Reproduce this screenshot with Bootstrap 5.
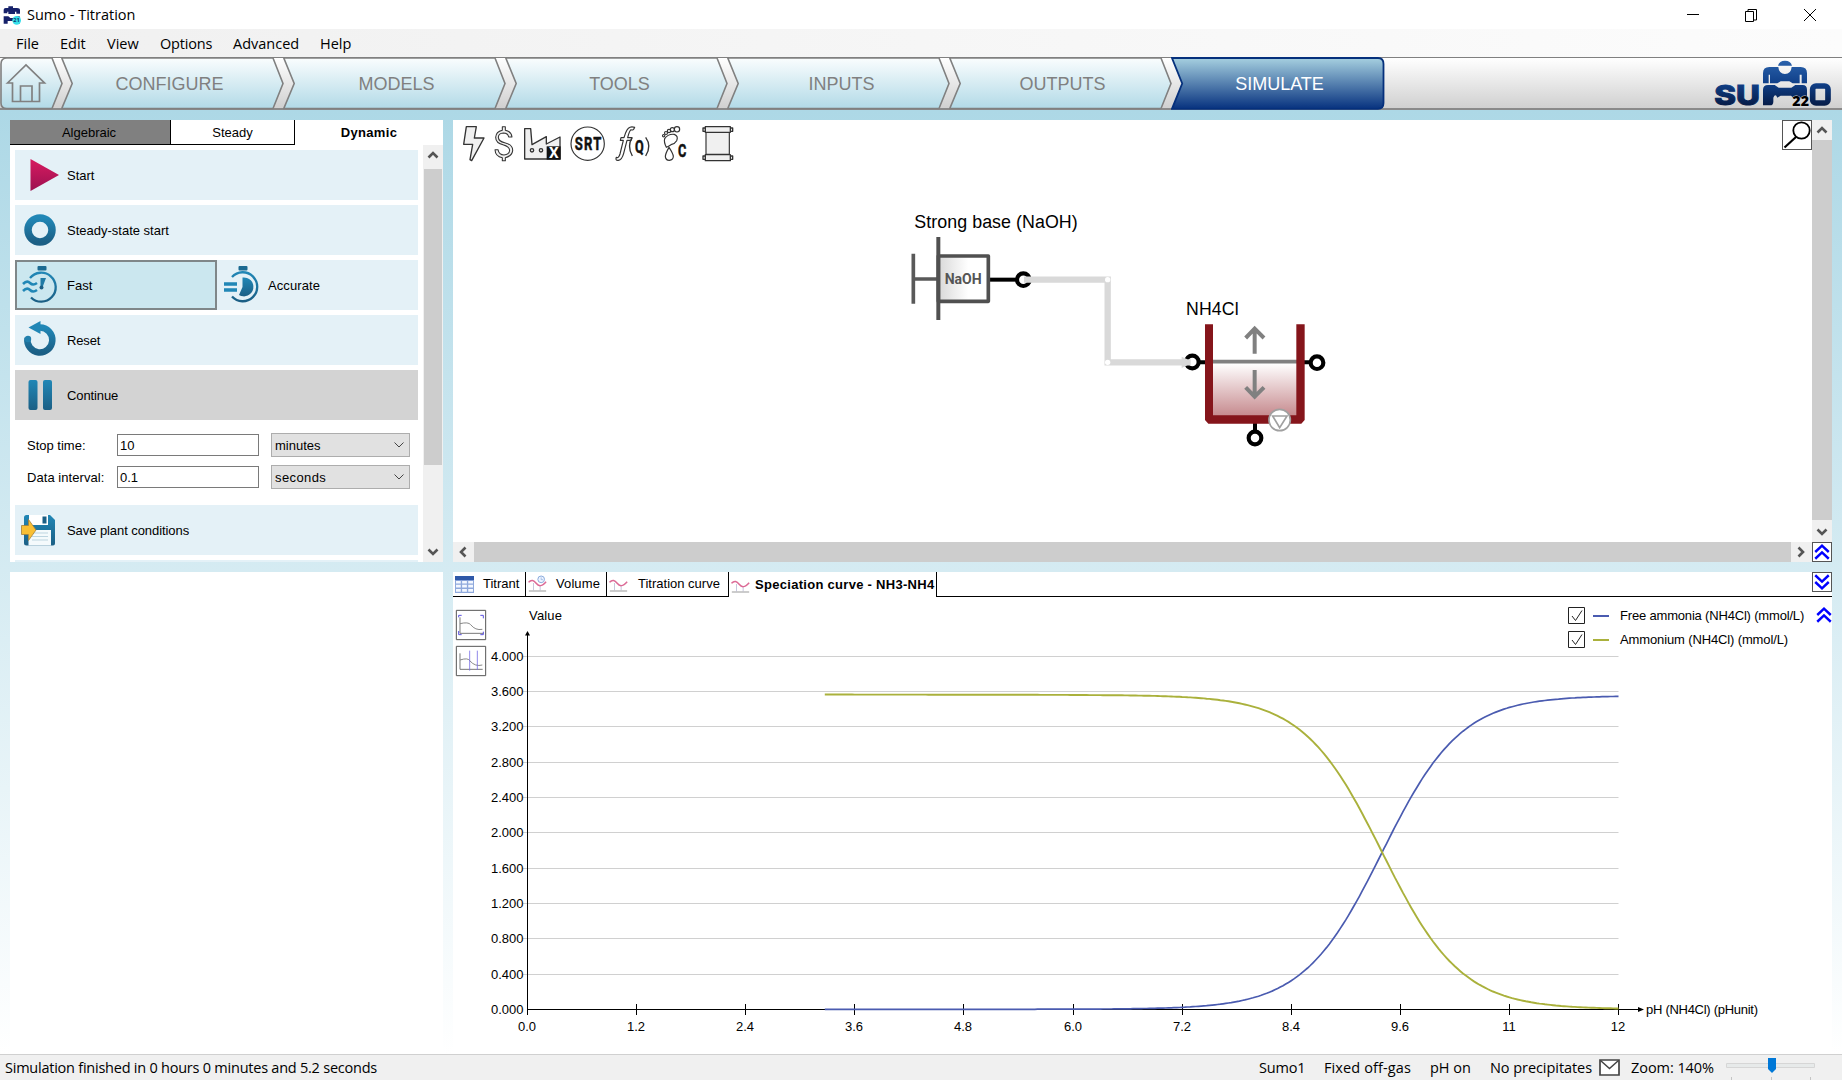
<!DOCTYPE html>
<html lang="en">
<head>
<meta charset="utf-8">
<title>Sumo - Titration</title>
<link rel="stylesheet" href="https://cdn.jsdelivr.net/npm/bootstrap@5.3.0/dist/css/bootstrap.min.css">
<style>
html,body{height:100%;overflow:hidden}
body{font-family:"Liberation Sans",Arial,sans-serif;font-size:13px;line-height:1;color:#000;background:#fff}
svg{display:block;flex:none}
.ui{font-family:"Open Sans","Noto Sans",sans-serif;font-size:14.5px;white-space:nowrap}
.ui span{display:block;flex:none;white-space:nowrap}
.titlebar{height:29px;padding:0 26px 0 3px}
.titlebar span,.menus span,.status span{padding-top:2px}
.menus{height:28px;padding-left:16px;background:linear-gradient(90deg,#f0f0f0,#fcfcfc)}
.steps{height:53px;background:linear-gradient(#fff,#d0d0d0);border-top:1px solid #808080;border-bottom:2px solid #8a8a8a}
.step{position:relative;width:222px;height:51px;font-size:18px;color:#808080}
.step svg{position:absolute;left:0;top:-1px}
.step b{position:relative;font-weight:400}
.work{background:linear-gradient(#add8e6,#fff);padding:10px 10px 0;height:944px}
.left{width:433px;margin-right:10px}
.pane{background:#fff}
.modes{height:25px}
.modes>div{border:0 solid #000;border-width:0 1px 1px 0;display:flex;align-items:center;justify-content:center}
.row-btn{height:50px;background:#e4f1f7;margin-bottom:5px;width:403px;position:relative}
.row-btn svg{position:absolute;left:0;top:0}
.row-btn span{margin-left:52px}
.sb{background:#f0f0f0}
.thumb{background:#cdcdcd}
.inp{width:142px;height:22px;border:1px solid #7a7a7a;padding-left:2px;display:flex;align-items:center}
.sel{width:139px;height:24px;border:1px solid #adadad;background:#e1e1e1;padding:0 5px 0 3px;margin-left:12px}
.tabs{height:25px;line-height:24px}
.tabs>div{border:0 solid #000;border-width:0 1px 1px 0;display:flex;align-items:center}
.boxed{border:1px solid #555;background:#fff}
.legendbox{position:absolute;left:1115px;top:9px;width:246px;background:rgba(255,255,255,.75);white-space:nowrap}
.status{height:26px;border-top:1px solid #d0d0d0;background:#f0f0f0}
</style>
</head>
<body class="d-flex flex-column">
<svg width="0" height="0" style="position:absolute">
<defs>
<linearGradient id="gs" x1="0" y1="0" x2="0" y2="1"><stop offset="0" stop-color="#fafdfe"/><stop offset="1" stop-color="#b2dae7"/></linearGradient>
<linearGradient id="ga" x1="0" y1="0" x2="0" y2="1"><stop offset="0" stop-color="#a6d0e0"/><stop offset="1" stop-color="#07327f"/></linearGradient>
<linearGradient id="gb" x1="0" y1="0" x2="0" y2="1"><stop offset="0" stop-color="#2187b6"/><stop offset="1" stop-color="#1b5f85"/></linearGradient>
<linearGradient id="gr" x1="0" y1="0" x2="0" y2="1"><stop offset="0" stop-color="#d81b60"/><stop offset="1" stop-color="#9c1150"/></linearGradient>
<linearGradient id="gl" gradientUnits="userSpaceOnUse" x1="0" y1="32" x2="0" y2="166"><stop offset="0" stop-color="#2a62ac"/><stop offset=".5" stop-color="#104089"/><stop offset="1" stop-color="#061c48"/></linearGradient>
<linearGradient id="gt" x1="0" y1="0" x2="0" y2="1"><stop offset="0" stop-color="#fff"/><stop offset="1" stop-color="#c68a8e"/></linearGradient>
<linearGradient id="gn" x1="0" y1="0" x2="1" y2="0"><stop offset="0" stop-color="#d8d8d8"/><stop offset=".6" stop-color="#fff"/></linearGradient>
<symbol id="stepshape" viewBox="0 0 224 53"><path d="M.8 1H212L222 26.500 212 51.500H.8L11.200 26.500Z" fill="url(#gs)" stroke="#808080" stroke-width="1.600"/></symbol>
<symbol id="up2" viewBox="0 0 20 20"><path d="M2.500 10 10 3l7.500 7M2.500 17.500l7.500-7 7.500 7" fill="none" stroke="#00f" stroke-width="2.700"/></symbol>
<symbol id="chev" viewBox="0 0 20 20"><path d="M5.500 12.500 10 8l4.500 4.500" fill="none" stroke="#555" stroke-width="2.600"/></symbol>
<symbol id="curve" viewBox="0 0 56 54"><path d="M2 48H54" stroke="#999" stroke-width="3"/><path d="M16 24V46M36 30V46" stroke="#aac" stroke-width="2"/><path d="M1 22C10 12 17 16 24 25S40 36 54 20" fill="none" stroke="#dc6a96" stroke-width="4.500"/></symbol>
</defs>
</svg>

<header class="titlebar ui d-flex align-items-center">
<svg width="19" height="20" viewBox="0 0 57 60"><g fill="#16216a"><path d="M2 25V14Q2 9 8 9H16V4H30V9H42Q51 9 51 15V26H40V20H36V27H16V20H13V25Z"/><path d="M2 56V34H16L22 39H34L40 34H50V56H38L32 48H22L14 48V56Z"/></g><circle cx="41" cy="46" r="13" fill="#37e0ea"/><text x="31" y="52" font-size="17" font-weight="700" fill="#0b3a70">21</text></svg>
<span style="margin-left:5px">Sumo - Titration</span>
<svg class="ms-auto" width="130" height="16" viewBox="0 0 130 16" fill="none" stroke="#000"><path d="M1 7.500H13M59.500 4.500h8v10h-8ZM62 4V2.500h8.500V13H68M118 2l12 12M130 2 118 14"/></svg>
</header>
<nav class="menus ui d-flex align-items-center">
<span style="width:44px">File</span><span style="width:47px">Edit</span><span style="width:53px">View</span><span style="width:73px;letter-spacing:-.2px">Options</span><span style="width:87px">Advanced</span><span>Help</span>
</nav>
<div class="steps d-flex">
<svg width="61" height="53" viewBox="0 0 61 53" style="margin-top:-1px;overflow:visible"><path d="M7 1H52L62 26.500 52 51.500H7Q1 51.500 1 46V7Q1 1 7 1Z" fill="url(#gs)" stroke="#808080" stroke-width="1.600"/><path d="M7.500 26 26 8 44.500 26H39.500V44.500H12.500V26Z" fill="none" stroke="#808080" stroke-width="1.700"/><path d="M20.500 44V29H32V44" fill="none" stroke="#808080" stroke-width="1.700"/></svg>
<div class="step"><svg width="224" height="53"><use href="#stepshape"/></svg><b class="d-flex h-100 align-items-center justify-content-center" style="padding-right:5px">CONFIGURE</b></div>
<div class="step"><svg width="224" height="53"><use href="#stepshape"/></svg><b class="d-flex h-100 align-items-center justify-content-center" style="padding-left:5px">MODELS</b></div>
<div class="step"><svg width="224" height="53"><use href="#stepshape"/></svg><b class="d-flex h-100 align-items-center justify-content-center" style="padding-left:7px">TOOLS</b></div>
<div class="step"><svg width="224" height="53"><use href="#stepshape"/></svg><b class="d-flex h-100 align-items-center justify-content-center" style="padding-left:7px">INPUTS</b></div>
<div class="step"><svg width="224" height="53"><use href="#stepshape"/></svg><b class="d-flex h-100 align-items-center justify-content-center" style="padding-left:5px">OUTPUTS</b></div>
<div class="step text-white"><svg width="214" height="53" viewBox="0 0 214 53"><path d="M1 1H207Q212.500 1 212.500 7V46Q212.500 51.800 207 51.800H1L11.200 26.500Z" fill="url(#ga)" stroke="#05307c" stroke-width="1.800"/></svg><b class="d-flex h-100 align-items-center justify-content-center" style="padding-right:5px">SIMULATE</b></div>
<svg class="ms-auto" width="152" height="53" viewBox="0 21 456 159" style="margin-top:-1px;overflow:visible"><g fill="url(#gl)"><text x="73" y="164" font-family="Inter,sans-serif" font-weight="800" font-size="82" textLength="137" lengthAdjust="spacingAndGlyphs" stroke="url(#gl)" stroke-width="3">SU</text><rect x="368" y="108" width="46" height="51" rx="10" fill="none" stroke="url(#gl)" stroke-width="17"/><path d="M264 47Q268 32 285 32T306 47Z"/><path d="M219 100V70Q219 51 238 51H265Q267 72 285 72T305 51H332Q351 51 351 70V100H335V74H329V100H308L298 94H272L262 100H240V74H236V100Z"/><path d="M219 166V120Q219 105 234 105H254L266 113H304L316 105H338Q351 105 351 120V145H312L303 137H272L262 143Q256 129 250 143V155Q250 166 240 166Z"/></g><text x="307" y="169" font-family="Open Sans,sans-serif" font-weight="800" font-size="43" textLength="50" lengthAdjust="spacingAndGlyphs" stroke="#ddd" stroke-width="3" paint-order="stroke">22</text></svg>
</div>

<main class="work d-flex">
<section class="left d-flex flex-column">
<div class="pane overflow-hidden" style="height:442px">
<div class="modes d-flex"><div style="width:161px;background:#808080;padding-right:2px">Algebraic</div><div style="width:124px">Steady</div><div class="flex-fill border-0 fw-bold" style="letter-spacing:.35px"><span>Dynamic</span></div></div>
<div class="d-flex" style="height:417px">
<div style="padding:5px 0 0 5px;width:413px">
<div class="row-btn d-flex align-items-center"><svg width="50" height="50"><path d="M15.500 9 44 25 15.500 41Z" fill="url(#gr)"/></svg><span>Start</span></div>
<div class="row-btn d-flex align-items-center"><svg width="50" height="50"><circle cx="25" cy="25" r="12" fill="none" stroke="url(#gb)" stroke-width="7.500"/></svg><span>Steady-state start</span></div>
<div class="row-btn d-flex">
<div class="d-flex align-items-center position-relative" style="width:202px;background:#cbe7ef;border:2px solid #7f8789"><svg width="50" height="50" style="left:-2px;top:-2px"><rect x="22.500" y="6" width="9" height="4.500" rx="1" fill="#1b6a92"/><path d="M15 18A14.500 14.500 0 1 1 16 37.500" fill="none" stroke="url(#gb)" stroke-width="2.300"/><path d="M8 24q4-4 7-1t7 0M8 31q4-4 7-1t7 0" fill="none" stroke="#2187b6" stroke-width="2.600"/><path d="M25.500 18 31 18 28 26H25.500Z" fill="#1f7aa5"/><circle cx="26.500" cy="27.500" r="2" fill="#1b5f85"/></svg><span style="margin-left:50px">Fast</span></div>
<div class="d-flex align-items-center position-relative flex-fill"><svg width="50" height="50"><rect x="21.500" y="6" width="9" height="4.500" rx="1" fill="#1b6a92"/><path d="M15 17A14.500 14.500 0 1 1 15 36.500" fill="none" stroke="url(#gb)" stroke-width="2.300"/><path d="M7 24H20M7 30H20" stroke="#2187b6" stroke-width="3.400"/><path d="M25.500 17.500A9.500 9.500 0 1 1 22 35L25.500 27Z" fill="url(#gb)"/></svg><span style="margin-left:51px;letter-spacing:.08px">Accurate</span></div>
</div>
<div class="row-btn d-flex align-items-center"><svg width="50" height="50"><path d="M12.500 23A12.500 12.500 0 1 0 25 12.500" fill="none" stroke="url(#gb)" stroke-width="6.500"/><circle cx="13" cy="24" r="3.200" fill="#2180ad"/><path d="M13.500 12.500 25.500 6V19Z" fill="#2187b6"/></svg><span style="letter-spacing:-.15px">Reset</span></div>
<div class="row-btn d-flex align-items-center" style="background:#d3d3d3"><svg width="50" height="50" fill="url(#gb)"><rect x="13.500" y="10" width="9" height="30" rx="2"/><rect x="28" y="10" width="9" height="30" rx="2"/></svg><span style="letter-spacing:-.1px">Continue</span></div>
<div class="d-flex flex-column" style="height:80px;padding:8px 0 0 12px;gap:8px">
<div class="d-flex align-items-center"><span style="width:90px">Stop time:</span><div class="inp">10</div><div class="sel d-flex align-items-center justify-content-between"><span>minutes</span><svg width="10" height="6"><path d="M.5.5 5 5 9.500.5" fill="none" stroke="#444"/></svg></div></div>
<div class="d-flex align-items-center"><span style="width:90px;letter-spacing:.06px">Data interval:</span><div class="inp">0.1</div><div class="sel d-flex align-items-center justify-content-between"><span style="letter-spacing:.4px">seconds</span><svg width="10" height="6"><path d="M.5.5 5 5 9.500.5" fill="none" stroke="#444"/></svg></div></div>
</div>
<div class="row-btn d-flex align-items-center"><svg width="50" height="50"><path d="M9 12.500q0-2.500 2.500-2.500H35l5 5V38.500q0 2-2 2H11.500Q9 40.500 9 38Z" fill="url(#gb)"/><path d="M14 10H33V20H14Z" fill="#fff"/><rect x="27.500" y="11.500" width="4" height="7" fill="#1b5f85"/><path d="M13.500 25H36V40.500H13.500Z" fill="#f4fafc"/><path d="M17 28H33M17 31.500H33M17 35H33" stroke="#bdd5e0"/><path d="M6.500 20.500H13.500V14.500L21 25 13.500 35.500V29.500H6.500Z" fill="#f9bf33" stroke="#a5803a" stroke-width=".8"/></svg><span style="letter-spacing:-.07px">Save plant conditions</span></div>
<div class="row-btn"></div>
</div>
<div class="sb ms-auto d-flex flex-column" style="width:20px"><svg width="20" height="24"><use href="#chev" width="20" height="20"/></svg><div class="thumb mx-auto" style="width:18px;height:296px"></div><svg class="mt-auto" width="20" height="20"><use href="#chev" width="20" height="20" transform="rotate(180 10 10)"/></svg></div>
</div>
</div>
<div class="pane flex-fill" style="margin-top:10px"></div>
</section>

<section class="flex-fill d-flex flex-column" style="width:1379px">
<div class="pane position-relative d-flex flex-column" style="height:442px">
<div class="d-flex" style="height:422px">
<svg width="1359" height="422" viewBox="453 120 1359 422">
<g transform="translate(440 110) scale(.33333)" fill="#f0f0f0" stroke="#333" stroke-width="4" stroke-linejoin="round">
<path d="M79 50H109L103 84H132L95 152 90 149 98 103H71Z"/>
<path d="M187 50H196V61Q214 64 216 81H206Q204 69 190 69 175 70 175 82 176 94 194 98 219 104 218 122 216 138 196 143V152H187V143Q166 139 165 119H174Q177 135 192 135 208 134 209 121 208 110 191 105 167 100 167 82 168 65 187 61Z" stroke-width="3.200"/>
<path d="M254 56H272L276 104 319 80V102L360 81V147H254Z"/><circle cx="276" cy="121" r="5"/><circle cx="303" cy="121" r="5"/><rect x="320" y="109" width="42" height="40" fill="#111" stroke="none"/>
<circle cx="443" cy="101" r="50" fill="#fff" stroke-width="3.500"/>
<path d="M584 52Q566 45 557 68L552 83H543L541 91H550L540 132Q536 146 529 142 525 152 535 151 546 149 551 130L561 91H573L575 83H563Q568 62 573 59 580 63 584 52Z" fill="#fff" stroke-width="3.500"/>
<path d="M577 82Q560 108 577 138M617 82Q636 108 617 138" fill="none" stroke-width="4"/>
<g fill="#fff" stroke-width="3.500"><circle cx="711" cy="58" r="8"/><circle cx="697" cy="59" r="6"/><circle cx="687" cy="63" r="5"/><circle cx="678" cy="69" r="4.500"/><circle cx="671" cy="77" r="3.500"/><path d="M674 86Q684 71 703 73 716 78 710 92 705 101 693 104 683 110 679 112 671 96 674 86Z"/><path d="M687 112Q676 131 676 140 677 151 688 151 700 150 700 139 699 130 687 112Z"/></g>
<path d="M798 67H868V133H798Z" stroke-width="3.500"/><path d="M796 50H871V67H796ZM789 54H796V64H789ZM871 54H878V64H871ZM796 134H871V152H796ZM789 138H796V148H789ZM871 138H878V148H871Z"/>
<g font-family="Roboto,sans-serif" font-weight="700"><text x="327" y="144" fill="#fff" stroke="none" font-size="42" textLength="29" lengthAdjust="spacingAndGlyphs">X</text><g fill="#111" stroke="#111" stroke-width="1.500"><text transform="translate(404 120) scale(.74 1)" font-size="53" textLength="108">SRT</text><text x="585" y="130" font-size="55" textLength="26" lengthAdjust="spacingAndGlyphs">Q</text><text x="714" y="142" font-size="55" textLength="25" lengthAdjust="spacingAndGlyphs">C</text></g></g>
</g>
<g transform="translate(880 200) scale(.33333)">
<text x="103" y="85" font-size="53.500" textLength="490">Strong base (NaOH)</text>
<path d="M330 239H410" stroke="#000" stroke-width="12"/><circle cx="430" cy="239" r="19" fill="#fff" stroke="#000" stroke-width="12.500"/>
<path d="M100 161V311M100 237H175" stroke="#595959" stroke-width="11" fill="none"/>
<path d="M175 168H325V304H175Z" fill="url(#gn)" stroke="#505050" stroke-width="11" stroke-linejoin="round"/><path d="M175 111V360" stroke="#505050" stroke-width="12"/>
<text x="194" y="253" font-size="44" font-weight="700" fill="#555" font-family="Roboto,sans-serif" textLength="111" lengthAdjust="spacingAndGlyphs">NaOH</text>
<path d="M950 487H980M1270 487H1295M1125 665V700" stroke="#000" stroke-width="12"/>
<g fill="#fff" stroke="#000" stroke-width="12.500"><circle cx="937" cy="486" r="19"/><circle cx="1311" cy="488" r="19"/><circle cx="1125" cy="714" r="19"/></g>
<path d="M432 239H683V487H932" fill="none" stroke="#d9d9d9" stroke-width="19"/><circle cx="683" cy="239" r="8" fill="#fff"/><circle cx="683" cy="487" r="8" fill="#fff"/><path d="M905 470V504L922 496 916 487 922 478Z" fill="#d9d9d9"/>
<rect x="998" y="490" width="254" height="158" fill="url(#gt)"/><path d="M998 485H1252" stroke="#808080" stroke-width="11"/>
<path d="M975 373H999V646H1249V373H1274V660L1264 671H985L975 660Z" fill="#85151b"/>
<path d="M1124 461V386M1097 414 1124 386 1152 414M1124 510V590M1097 562 1124 590 1152 562" fill="none" stroke="#808080" stroke-width="12"/>
<circle cx="1199" cy="660" r="32" fill="#fff" stroke="#a0a0a0" stroke-width="5"/><path d="M1178 648H1221L1199 683Z" fill="#fff" stroke="#a0a0a0" stroke-width="5"/>
<text x="918" y="345" font-size="53" textLength="158">NH4Cl</text>
</g>
<g transform="translate(1782 120)"><rect x=".5" y=".5" width="29" height="29" fill="#fff" stroke="#555"/><circle cx="19.500" cy="10.500" r="8.200" fill="none" stroke="#000" stroke-width="1.800"/><path d="M14 17 2.500 27.500" stroke="#000" stroke-width="2.200"/></g>
</svg>
<div class="sb d-flex flex-column" style="width:20px"><svg width="20" height="20"><use href="#chev" width="20" height="20"/></svg><div class="thumb flex-fill"></div><svg width="20" height="22"><use href="#chev" width="20" height="20" transform="translate(0 2) rotate(180 10 10)"/></svg></div>
</div>
<div class="d-flex" style="height:20px"><div class="sb d-flex" style="width:1359px"><svg width="21" height="20"><use href="#chev" width="20" height="20" transform="rotate(-90 10 10)"/></svg><div class="thumb flex-fill"></div><svg width="21" height="20"><use href="#chev" width="20" height="20" transform="rotate(90 10 10)"/></svg></div><svg class="boxed" width="20" height="20"><use href="#up2" width="18" height="18"/></svg></div>
</div>
<div class="pane flex-fill d-flex flex-column" style="margin-top:10px">
<div class="tabs d-flex">
<div style="width:73px;padding-left:2px"><svg width="19" height="17" viewBox="0 0 56 50"><path d="M0 0H56V50H0Z" fill="#8fa9dc"/><path d="M0 0H56V12H0Z" fill="#2f58a8"/><path d="M3 15H17V22H3ZM21 15H35V22H21ZM39 15H53V22H39ZM3 26H17V34H3ZM21 26H35V34H21ZM39 26H53V34H39ZM3 38H17V46H3ZM21 38H35V46H21ZM39 38H53V46H39Z" fill="#f4f8ff"/></svg><span style="margin-left:9px">Titrant</span></div>
<div style="width:81px;padding-left:2px"><svg width="19" height="18" viewBox="0 0 56 54"><use href="#curve"/><circle cx="39" cy="13" r="10" fill="#eef4ff" stroke="#8aabdd" stroke-width="3"/><path d="M39 7V14H45" fill="none" stroke="#8aabdd" stroke-width="2"/></svg><span style="margin-left:9px;letter-spacing:.1px">Volume</span></div>
<div style="width:122px;padding-left:2px"><svg width="19" height="18"><use href="#curve"/></svg><span style="margin-left:10px">Titration curve</span></div>
<div class="fw-bold" style="width:208px;padding-left:2px;border-bottom:0"><svg width="19" height="18"><use href="#curve"/></svg><span class="text-nowrap" style="margin-left:5px;letter-spacing:.29px">Speciation curve - NH3-NH4</span></div>
<div class="flex-fill justify-content-end align-items-start" style="border-right:0"><svg class="boxed" width="20" height="20"><use href="#up2" width="18" height="18" transform="rotate(180 9 9)"/></svg></div>
</div>
<div class="position-relative">
<svg id="plot" width="1379" height="456" viewBox="453 597 1379 456">
<g transform="translate(440 530) scale(.33333)" fill="none" stroke-width="3"><path d="M49 241H137V329H49ZM49 349H137V437H49Z" stroke="#555"/><path d="M60 262V310H130M60 370V418H128" stroke="#777"/><path d="M56 262V256H65M121 256H130V265M56 303V314H65M121 314H130V305" stroke="#5a50e0"/><path d="M60 281Q85 275 92 284 106 302 127 298M60 390Q85 382 90 393 106 411 127 405" stroke="#888"/><path d="M89 362V422M112 362V420" stroke="#7a70e6" stroke-width="2.500"/></g>
<text x="529" y="619.500" textLength="33">Value</text>
<g id="grid"></g>
<path d="M527.500 1009.500H1640M527.500 634V1009.500" stroke="#000" fill="none"/>
<path d="M1638 1007 1644 1009.500 1638 1012ZM525 635.500 527.500 631 530 635.500Z"/>
<path id="nh3" fill="none" stroke="#4a5bb0" stroke-width="1.700"/><path id="nh4" fill="none" stroke="#aab13c" stroke-width="1.900"/>
<text x="1646" y="1014" textLength="112">pH (NH4Cl) (pHunit)</text>
</svg>
<div class="legendbox d-flex flex-column" style="gap:7px;padding:2px 0 2px">
<div class="d-flex align-items-center" style="height:17px;margin-top:-1px"><svg width="17" height="17"><path d="M.5.5h16v16H.5ZM4 9l3.500 4.500L14 3.500" fill="#fff" stroke="#222"/></svg><i style="width:16px;height:2px;background:#4a5bb0;margin-left:8px"></i><span style="margin-left:11px;letter-spacing:-.18px">Free ammonia (NH4Cl) (mmol/L)</span></div>
<div class="d-flex align-items-center" style="height:17px"><svg width="17" height="17"><path d="M.5.5h16v16H.5ZM4 9l3.500 4.500L14 3.500" fill="#fff" stroke="#222"/></svg><i style="width:16px;height:2px;background:#aab13c;margin-left:8px"></i><span style="margin-left:11px;letter-spacing:-.13px">Ammonium (NH4Cl) (mmol/L)</span></div>
</div>
<svg width="18" height="18" style="position:absolute;left:1362px;top:9px"><use href="#up2"/></svg>
</div>
</div>
</section>
</main>

<footer class="status ui d-flex align-items-center">
<span style="margin-left:5px;letter-spacing:-.234px">Simulation finished in 0 hours 0 minutes and 5.2 seconds</span>
<div class="ms-auto d-flex align-items-center" style="width:583px"><span style="width:65px;letter-spacing:-.2px">Sumo1</span><span style="width:106px;letter-spacing:.11px">Fixed off-gas</span><span style="width:60px">pH on</span><span style="width:109px;letter-spacing:-.06px">No precipitates</span>
<svg width="21" height="17"><path d="M1 1H20V16H1Z" fill="#fff" stroke="#444" stroke-width="1.700"/><path d="M1.500 1.500 10.500 9.500 19.500 1.500" fill="none" stroke="#444" stroke-width="1.500"/></svg><span style="margin-left:11px;width:95px;letter-spacing:-.06px">Zoom: 140%</span>
<svg width="92" height="25" viewBox="1726 1055 92 25"><path d="M1726.500 1063.500h88v4h-88Z" fill="#e7eaea" stroke="#d6d6d6"/><path d="M1731.500 1077v3M1771.500 1077v3M1810.500 1077v3" stroke="#c4c4c4"/><path d="M1768 1058h8v11l-4 4-4-4Z" fill="#0078d7"/></svg></div>
</footer>
<script src="https://cdn.jsdelivr.net/npm/bootstrap@5.3.0/dist/js/bootstrap.bundle.min.js"></script>
<script>
// Axes: pH 0..12 across, concentration in mmol/L upwards
const X=p=>527.5+p*1091/12, Y=v=>1009.3-v*882.5/10;
let g='';
for(let i=0;i<=10;i++){
  const y=Math.floor(Y(i*.4))+.5, x=Math.floor(X(i*1.2))+.5;
  if(i)g+=`<path d="M523 ${y}H1618.500" stroke="#d0d0d0"/>`;
  g+=`<text x="523.500" y="${y+4}" text-anchor="end">${(i*.4).toFixed(3)}</text>`;
  g+=`<path d="M${x} 1004V1015" stroke="#000"/><text x="${x-.5}" y="1030.500" text-anchor="middle">${['0.0','1.2','2.4','3.6','4.8','6.0','7.2','8.4','9.6','11','12'][i]}</text>`;
}
document.getElementById('grid').innerHTML=g;
// Acid/base pair with pKa 9.4, slightly diluted as titrant is added
let a='M',b='M';
for(let p=3.27;p<=12.001;p+=.03){
  const c=3.567-.012*(p-3.27)/8.73, f=1/(1+Math.pow(10,9.4-p));
  a+=`${X(p).toFixed(1)} ${Y(c*f).toFixed(1)} `; b+=`${X(p).toFixed(1)} ${Y(c*(1-f)).toFixed(1)} `;
}
document.getElementById('nh3').setAttribute('d',a);document.getElementById('nh4').setAttribute('d',b);
</script>
</body>
</html>
